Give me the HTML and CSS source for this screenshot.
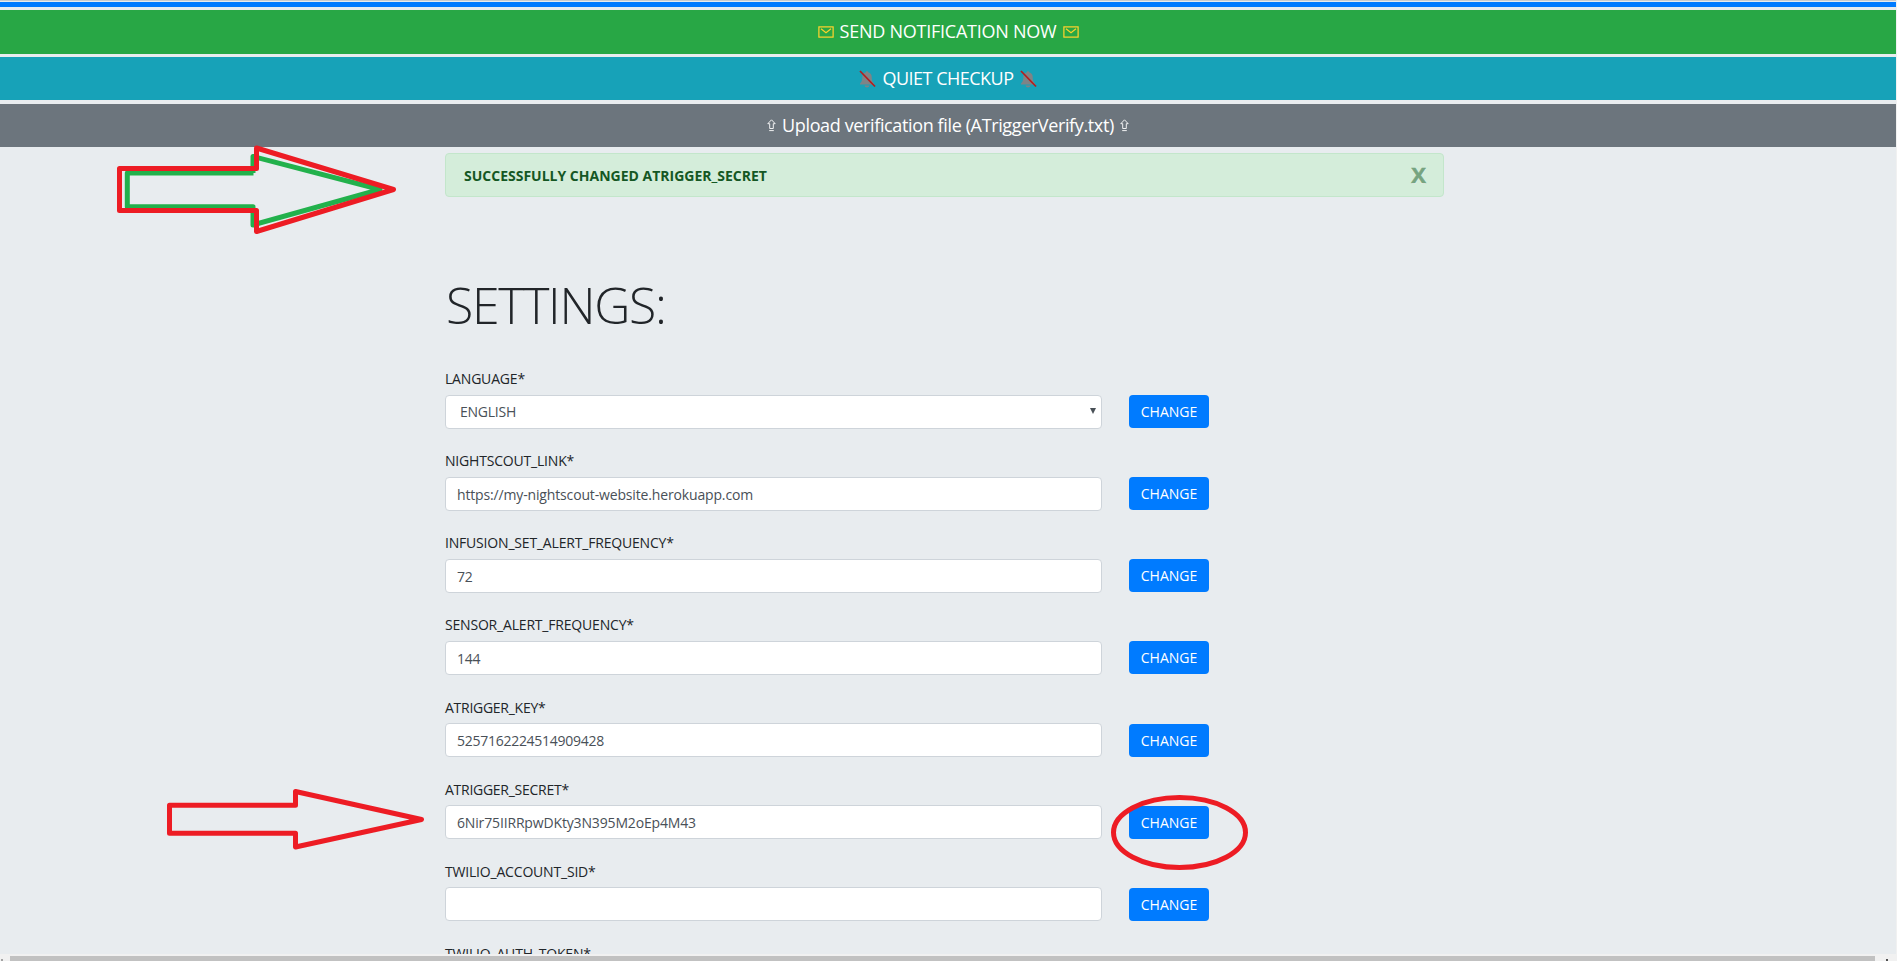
FILE: index.html
```html
<!DOCTYPE html>
<html lang="en">
<head>
<meta charset="utf-8">
<title>Settings</title>
<link rel="stylesheet" href="styles.css">
</head>
<body>
<svg class="defs" aria-hidden="true">
  <symbol id="mail" viewBox="0 0 16 12"><rect x="0" y="0" width="16" height="12" rx="1" fill="#8bb93c"/><rect x="1" y="1" width="14" height="10" fill="#28a745" stroke="#fdd32b" stroke-width="1"/><path d="M3 2.800 8 6.800l5-4" fill="none" stroke="#fdd32b" stroke-width="1.1"/></symbol>
  <symbol id="bell" viewBox="0 0 17 18"><path d="M8 1.200c.8 0 1.100.5 1.200 1.100C11.500 2.900 12.700 4.800 12.700 7c0 3.500.6 5 2.300 6.500v1H1v-1C2.700 12 3.300 10.500 3.300 7c0-2.200 1.200-4.100 3.500-4.700C6.900 1.700 7.200 1.200 8 1.200zM5.500 15.500h5c-.3 1.300-1.200 2-2.500 2s-2.200-.7-2.500-2z" fill="#7e8487"/><path d="M1 1 16 16.500" stroke="#b51c1c" stroke-width="1.700"/></symbol>
  <symbol id="up" viewBox="0 0 9 13"><path d="M4.500.8 8.200 4.700H6.300V9.500H2.700V4.700H.8zM2.200 11.600h4.600" fill="none" stroke="#fff" stroke-width=".9"/></symbol>
</svg>
<div class="page">
  <div class="bars">
    <div class="bar bar-blue"></div>
    <div class="bar bar-green"><svg class="mail"><use href="#mail"/></svg><span class="t-send">SEND NOTIFICATION NOW</span><svg class="mail"><use href="#mail"/></svg></div>
    <div class="bar bar-teal"><svg class="bell"><use href="#bell"/></svg><span class="t-quiet">QUIET CHECKUP</span><svg class="bell"><use href="#bell"/></svg></div>
    <div class="bar bar-gray"><svg class="up"><use href="#up"/></svg><span class="t-upload">Upload verification file (ATriggerVerify.txt)</span><svg class="up"><use href="#up"/></svg></div>
  </div>
  <main class="container">
    <div class="alert"><span>SUCCESSFULLY CHANGED ATRIGGER_SECRET</span><span class="close">X</span></div>
    <h1>SETTINGS:</h1>
    <div class="row"><label>LANGUAGE*</label><div class="line"><div class="field select"><span>ENGLISH</span><i class="caret"></i></div><button>CHANGE</button></div></div>
    <div class="row"><label>NIGHTSCOUT_LINK*</label><div class="line"><div class="field">https://my-nightscout-website.herokuapp.com</div><button>CHANGE</button></div></div>
    <div class="row"><label>INFUSION_SET_ALERT_FREQUENCY*</label><div class="line"><div class="field digits">72</div><button>CHANGE</button></div></div>
    <div class="row"><label>SENSOR_ALERT_FREQUENCY*</label><div class="line"><div class="field digits">144</div><button>CHANGE</button></div></div>
    <div class="row"><label class="tight">ATRIGGER_KEY*</label><div class="line"><div class="field digits">5257162224514909428</div><button>CHANGE</button></div></div>
    <div class="row"><label class="tight">ATRIGGER_SECRET*</label><div class="line"><div class="field">6Nir75IIRRpwDKty3N395M2oEp4M43</div><button>CHANGE</button></div></div>
    <div class="row"><label>TWILIO_ACCOUNT_SID*</label><div class="line"><div class="field"></div><button>CHANGE</button></div></div>
    <div class="row"><label>TWILIO_AUTH_TOKEN*</label></div>
  </main>
</div>
<div class="scrollbar"><i class="nub"></i><div class="thumb"></div><i class="nub nub-right"></i></div>
<svg class="marks" viewBox="0 0 1897 961">
  <path d="M253.500 173H127.300v33.700H253V225l127-35.500-127-33V173" stroke="#22b14c"/>
  <path d="M119.500 168.500h137v-20.500L393.500 189.500 256.500 231.500v-21h-137z" stroke="#ed1c24"/>
  <path d="M169.500 805.300h126V791.500l126 28-126 27.500v-13.700h-126z" stroke="#ed1c24"/>
  <ellipse cx="1179.500" cy="832.500" rx="66" ry="35" stroke="#ed1c24"/>
</svg>
</body>
</html>
```
FILE: styles.css
```css
* { box-sizing: border-box; }
body { margin: 0; height: 961px; overflow: hidden; display: flex; flex-direction: column; background: #f1f1f1; font-family: "Open Sans", "Noto Sans", sans-serif; font-size: 14px; color: #212529; }
.defs { position: absolute; width: 0; height: 0; }
.page { height: 954px; width: 1896px; overflow: hidden; background: #e8ecef; }
.bars { display: flex; flex-direction: column; border-top: 1px solid #c8cbce; padding-top: 1px; }
.bar { display: flex; align-items: center; justify-content: center; color: #fff; font-size: 18px; line-height: 24px; white-space: nowrap; }
.bar span { padding-bottom: 1px; }
.bar-blue { height: 5px; background: #007bff; }
.bar-green { height: 44px; margin-top: 3px; background: #28a745; }
.bar-teal { height: 43px; margin-top: 3px; background: #17a2b8; }
.bar-gray { height: 43px; margin-top: 4px; background: #6c757d; }
.mail { width: 16px; height: 12px; }
.bell { width: 17px; height: 18px; }
.up { width: 9px; height: 13px; }
.bar .t-send { margin: 0 6px 0 6px; padding-bottom: 2px; letter-spacing: -.24px; }
.t-quiet { margin: 0 6px 0 6px; letter-spacing: -.5px; }
.t-upload { margin: 0 6px; letter-spacing: -.37px; }
.container { width: 999px; margin-left: 445px; padding-top: 6px; }
.alert { height: 44px; display: flex; align-items: center; justify-content: space-between; padding: 0 17px 0 18px; border: 1px solid #c3e6cb; border-radius: 4px; background: #d4edda; color: #155724; font-weight: 700; }
.close { padding-bottom: 2px; font-size: 22px; color: #76a480; -webkit-text-stroke: .5px #76a480; text-shadow: 0 1px 0 #fff; }
h1 { margin: 73px 0 0 1px; height: 99px; font-size: 50px; line-height: 70px; font-weight: 300; letter-spacing: -1.300px; }
.row { height: 82.150px; }
label { display: block; height: 25.500px; line-height: 19px; letter-spacing: -.19px; white-space: nowrap; }
.tight { letter-spacing: -.27px; }
.line { display: flex; align-items: center; gap: 27px; }
.field { width: 657px; height: 34px; padding: 1px 12px 0 11px; border: 1px solid #ced4da; border-radius: 4px; background: #fff; color: #495057; font-size: 14px; line-height: 32px; letter-spacing: -.154px; white-space: nowrap; }
.digits { letter-spacing: -.27px; }
.select { display: flex; justify-content: space-between; align-items: center; padding: 0 5px 0 14px; letter-spacing: -.25px; }
.caret { border: 3px solid transparent; border-top: 6px solid #495057; border-bottom: 0; margin-bottom: 2px; }
button { width: 80px; height: 33px; padding: 0; border: 0; border-radius: 4px; background: #007bff; color: #fff; font: 14px "Open Sans", sans-serif; }
.scrollbar { height: 7px; padding: 2px 0 0 1px; display: flex; background: #f1f1f1; }
.thumb { width: 1865px; height: 5px; background: #c1c1c1; }
.nub { width: 2px; height: 2px; margin: 3px 7px 0 0; background: #a3a3a3; }
.nub-right { margin: 3px 0 0 11px; background: #505050; }
.marks { position: absolute; left: 0; top: 0; width: 1897px; height: 961px; fill: none; stroke-width: 5; stroke-linejoin: round; pointer-events: none; }
```
